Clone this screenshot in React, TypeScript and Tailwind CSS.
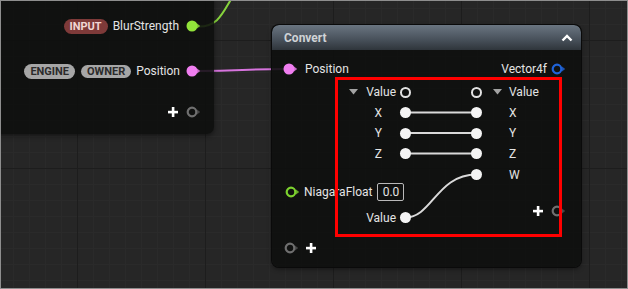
import React from 'react';

function Pin({ color, hollow, dim }: { color: string; hollow?: boolean; dim?: boolean }) {
  return (
    <svg width="16" height="12" viewBox="0 0 16 12" className="shrink-0">
      {hollow ? (
        <circle cx="6" cy="6" r="4.3" fill="none" stroke={color} strokeWidth="2.2" />
      ) : (
        <circle cx="6" cy="6" r="5.5" fill={color} />
      )}
      <path d="M11 3.6 L14.2 6 L11 8.4 Z" fill={color} opacity={dim ? 0.55 : 0.8} />
    </svg>
  );
}

function Dot() {
  return <span className="relative block w-[11px] h-[11px] rounded-full bg-[#f4f4f4] shrink-0" />;
}

function Ring() {
  return <span className="block w-[11px] h-[11px] rounded-full border-2 border-[#e2e2e2] shrink-0" />;
}

function Tri() {
  return (
    <svg width="9" height="6" viewBox="0 0 9 6" className="shrink-0">
      <path d="M0 0 L9 0 L4.5 5.5 Z" fill="#a3a3a3" />
    </svg>
  );
}

function Plus() {
  return (
    <svg width="10" height="10" viewBox="0 0 10 10" className="shrink-0">
      <rect x="3.8" y="0" width="2.6" height="10" fill="#ffffff" />
      <rect x="0" y="3.8" width="10" height="2.6" fill="#ffffff" />
    </svg>
  );
}

function Badge({ label, red }: { label: string; red?: boolean }) {
  return (
    <span
      className={
        red
          ? 'h-[15px] px-[6px] rounded-full bg-[#7e3a39] text-[#f1d6d4] text-[11px] font-bold leading-[15px]'
          : 'h-[15px] px-[6px] rounded-full bg-[#a6a6a6] text-[#2b2b2b] text-[11px] font-bold leading-[15px]'
      }
    >
      {label}
    </span>
  );
}

export default function App() {
  return (
    <div className="relative w-[628px] h-[289px] overflow-hidden border border-[#8e8e8e] bg-[#262626] bg-[linear-gradient(to_right,#1d1d1d_1px,transparent_1px),linear-gradient(to_bottom,#1d1d1d_1px,transparent_1px),linear-gradient(to_right,#2a2a2a_1px,transparent_1px),linear-gradient(to_bottom,#2a2a2a_1px,transparent_1px)] bg-[size:128px_128px,128px_128px,16px_16px,16px_16px] bg-[position:76px_39px] font-['Roboto',sans-serif] text-[12px] text-[#e4e4e4]">
      {/* wires between nodes */}
      <svg className="absolute left-[-1px] top-[-1px] pointer-events-none" width="628" height="289">
        <path d="M199 26.5 C 218 26.5, 222 14, 233 -4" fill="none" stroke="#86d33c" strokeWidth="2" />
        <path d="M199 71 C 240 71, 245 69, 286 69" fill="none" stroke="#d774de" strokeWidth="2" />
      </svg>

      {/* left node */}
      <div className="absolute left-[-11px] top-[-11px] w-[224px] h-[144px] rounded-[7px] bg-[rgba(14,15,14,0.88)] shadow-[0_2px_5px_rgba(0,0,0,0.45)] flex flex-col items-end pr-[12px] pt-[26px]">
        <div className="h-[20px] flex items-center">
          <Badge label="INPUT" red />
          <span className="ml-[5px]">BlurStrength</span>
          <span className="ml-[7px]">
            <Pin color="#92e33a" />
          </span>
        </div>
        <div className="mt-[25px] h-[20px] flex items-center">
          <Badge label="ENGINE" />
          <span className="ml-[6px]">
            <Badge label="OWNER" />
          </span>
          <span className="ml-[5px]">Position</span>
          <span className="ml-[6px]">
            <Pin color="#f07ef0" />
          </span>
        </div>
        <div className="mt-[21px] h-[20px] flex items-center">
          <Plus />
          <span className="ml-[8px]">
            <Pin color="#6f6f6f" hollow dim />
          </span>
        </div>
      </div>

      {/* Convert node */}
      <div className="absolute left-[271px] top-[24px] w-[309px] h-[242px] rounded-[7px] bg-[rgba(14,15,14,0.9)] shadow-[0_2px_5px_rgba(0,0,0,0.45)] ring-1 ring-[#0a0a0a] overflow-hidden flex flex-col">
        <div className="h-[25px] shrink-0 flex items-center justify-between pl-[12px] pr-[8px] bg-[linear-gradient(to_bottom,#6a7581,#4a535d_55%,#2f353b)] rounded-t-[7px]">
          <span className="font-bold text-[12px] text-[#cfd3d6]">Convert</span>
          <svg width="12" height="8" viewBox="0 0 12 8">
            <polyline points="1.5,6.5 6,2 10.5,6.5" fill="none" stroke="#ffffff" strokeWidth="2.4" />
          </svg>
        </div>

        <div className="mt-[9px] h-[20px] flex items-center justify-between pl-[11px] pr-[14px]">
          <div className="flex items-center">
            <Pin color="#f07ef0" />
            <span className="ml-[6px]">Position</span>
          </div>
          <div className="flex items-center">
            <span>Vector4f</span>
            <span className="ml-[4px]">
              <Pin color="#1f63d8" hollow />
            </span>
          </div>
        </div>

        <div className="relative mt-[3px] flex">
          <svg className="absolute left-0 top-0 pointer-events-none" width="309" height="146">
            <g stroke="#d9d9d9" strokeWidth="2" fill="none">
              <line x1="133.5" y1="30.5" x2="204.5" y2="30.5" />
              <line x1="133.5" y1="51" x2="204.5" y2="51" />
              <line x1="133.5" y1="71.5" x2="204.5" y2="71.5" />
              <path d="M133.5 135.5 C 160 135.5, 165 92.5, 204.5 92.5" />
            </g>
          </svg>

          <div className="relative w-[139px] flex flex-col">
            <div className="h-[20px] flex items-center justify-end">
              <Tri />
              <span className="ml-[8px]">Value</span>
              <span className="ml-[4px]">
                <Ring />
              </span>
            </div>
            <div className="h-[21px] flex items-center justify-end">
              <span>X</span>
              <span className="ml-[18px]">
                <Dot />
              </span>
            </div>
            <div className="h-[20px] flex items-center justify-end">
              <span>Y</span>
              <span className="ml-[18px]">
                <Dot />
              </span>
            </div>
            <div className="h-[21px] flex items-center justify-end">
              <span>Z</span>
              <span className="ml-[18px]">
                <Dot />
              </span>
            </div>
            <div className="mt-[18px] h-[20px] flex items-center pl-[13px]">
              <Pin color="#7cd12e" hollow />
              <span className="ml-[3px]">NiagaraFloat</span>
              <span className="ml-[5px] h-[18px] w-[27px] flex items-center justify-center border border-[#b9b9b9] rounded-[2px]">
                0.0
              </span>
            </div>
            <div className="mt-[5px] h-[21px] flex items-center justify-end">
              <span>Value</span>
              <span className="ml-[4px]">
                <Dot />
              </span>
            </div>
          </div>

          <div className="relative w-[110px] ml-[60px] flex flex-col">
            <div className="h-[20px] flex items-center">
              <Ring />
              <span className="ml-[11px]">
                <Tri />
              </span>
              <span className="ml-[7px]">Value</span>
            </div>
            <div className="h-[21px] flex items-center">
              <Dot />
              <span className="ml-[27px]">X</span>
            </div>
            <div className="h-[20px] flex items-center">
              <Dot />
              <span className="ml-[27px]">Y</span>
            </div>
            <div className="h-[21px] flex items-center">
              <Dot />
              <span className="ml-[27px]">Z</span>
            </div>
            <div className="h-[21px] flex items-center">
              <Dot />
              <span className="ml-[27px]">W</span>
            </div>
            <div className="mt-[16px] h-[20px] flex items-center justify-end pr-[14px]">
              <Plus />
              <span className="ml-[8px]">
                <Pin color="#6f6f6f" hollow dim />
              </span>
            </div>
          </div>
        </div>

        <div className="mt-[10px] h-[20px] flex items-center pl-[12px]">
          <Pin color="#6f6f6f" hollow dim />
          <span className="ml-[6px]">
            <Plus />
          </span>
        </div>
      </div>

      {/* highlight box */}
      <div className="absolute left-[334px] top-[76px] w-[227px] h-[160px] border-[3px] border-[#ff0000]" />
    </div>
  );
}
